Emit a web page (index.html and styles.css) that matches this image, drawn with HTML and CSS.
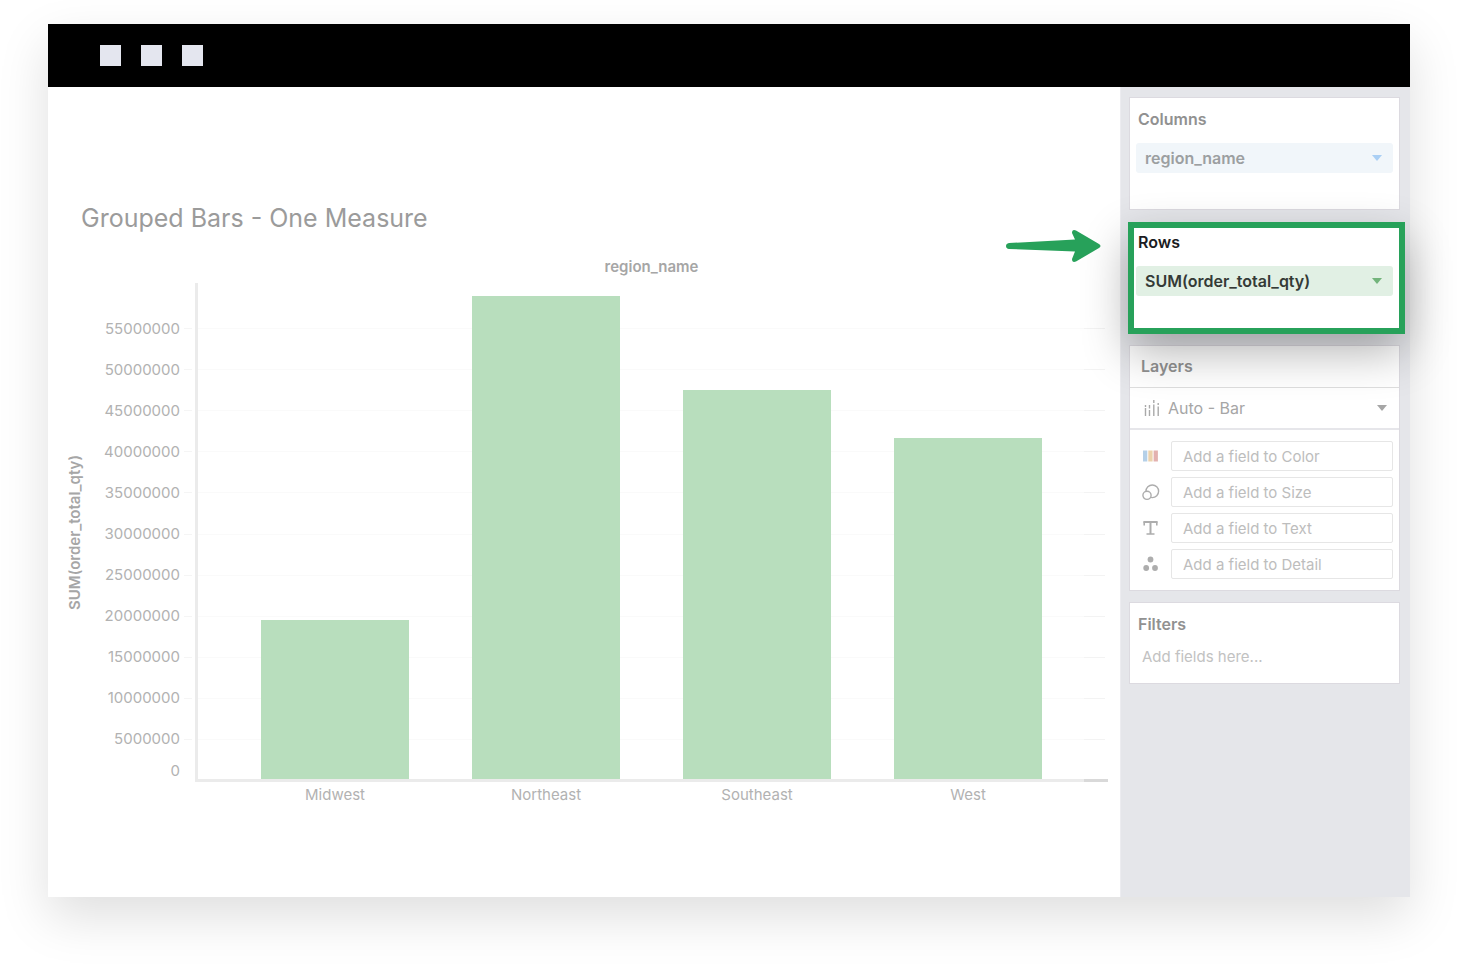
FILE: index.html
```html
<!DOCTYPE html>
<html lang="en">
<head>
<meta charset="utf-8">
<title>Grouped Bars - One Measure</title>
<link rel="stylesheet" href="styles.css">
</head>
<body>
<div class="window">
  <header class="titlebar"><span class="dot"></span><span class="dot"></span><span class="dot"></span></header>
  <div class="body">
    <main class="main">
      <h1 class="title">Grouped Bars - One Measure</h1>
      <section class="chart">
        <h2 class="chart-head">region_name</h2>
        <div class="y-title"><span>SUM(order_total_qty)</span></div>
        <ol class="scale">
          <li class="tick"><span class="num">55000000</span><i class="mark"></i><i class="line"></i></li>
          <li class="tick"><span class="num">50000000</span><i class="mark"></i><i class="line"></i></li>
          <li class="tick"><span class="num">45000000</span><i class="mark"></i><i class="line"></i></li>
          <li class="tick"><span class="num">40000000</span><i class="mark"></i><i class="line"></i></li>
          <li class="tick"><span class="num">35000000</span><i class="mark"></i><i class="line"></i></li>
          <li class="tick"><span class="num">30000000</span><i class="mark"></i><i class="line"></i></li>
          <li class="tick"><span class="num">25000000</span><i class="mark"></i><i class="line"></i></li>
          <li class="tick"><span class="num">20000000</span><i class="mark"></i><i class="line"></i></li>
          <li class="tick"><span class="num">15000000</span><i class="mark"></i><i class="line"></i></li>
          <li class="tick"><span class="num">10000000</span><i class="mark"></i><i class="line"></i></li>
          <li class="tick"><span class="num">5000000</span><i class="mark"></i><i class="line"></i></li>
          <li class="tick tick-zero"><span class="num">0</span></li>
        </ol>
        <div class="plot">
          <div class="bar" style="height:32.1%"></div>
          <div class="bar" style="height:97.4%"></div>
          <div class="bar" style="height:78.4%"></div>
          <div class="bar" style="height:68.8%"></div>
        </div>
        <div class="axis-end"></div>
        <div class="x-labels"><span>Midwest</span><span>Northeast</span><span>Southeast</span><span>West</span></div>
      </section>
    </main>
    <aside class="side">
      <section class="panel shelf">
        <h2 class="shelf-name">Columns</h2>
        <button class="pill pill-blue" type="button">region_name<span class="caret"></span></button>
      </section>
      <section class="shelf focus">
        <svg class="arrow" width="95" height="32" viewBox="0 0 95 32" aria-hidden="true"><path d="M3 13 L69 9.500 L66 3 Q66 -1 70 .5 L93 14 Q96 16 93 18 L70 31.500 Q66 33 66 29 L69 21.500 L3 19 Q0 18.500 0 16 Q0 13.500 3 13Z" fill="#27a15a"/></svg>
        <h2 class="shelf-name shelf-name-on">Rows</h2>
        <button class="pill pill-green" type="button">SUM(order_total_qty)<span class="caret"></span></button>
      </section>
      <section class="panel layers">
        <h2 class="layers-name">Layers</h2>
        <div class="mark-type">
          <svg class="mark-icon" width="16" height="18" viewBox="0 0 16 18" aria-hidden="true" stroke="#a9a9a9" stroke-width="1.400" fill="none"><path d="M1.500 6v2M1.500 9v8M5.500 6v3.500M5.500 11v6M9.800 1v3M9.800 5.500v11.500M14.200 4v2M14.200 7.500v9.500"/></svg>
          <select class="mark-select" aria-label="Mark type"><option>Auto - Bar</option></select>
          <span class="caret"></span>
        </div>
        <div class="fields">
          <label class="field">
            <svg width="18" height="18" viewBox="0 0 18 18" aria-hidden="true"><path d="M1 3.500h4.300v11h-4.300z" fill="#b5d0e8"/><path d="M6.300 3.500h4.300v11h-4.300z" fill="#ecd2ac"/><path d="M11.600 3.500h4.300v11h-4.300z" fill="#e3b1af"/></svg>
            <input class="input" type="text" placeholder="Add a field to Color" aria-label="Color">
          </label>
          <label class="field">
            <svg width="18" height="18" viewBox="0 0 18 18" aria-hidden="true" fill="none" stroke="#adadad" stroke-width="1.400"><circle cx="10.300" cy="8.300" r="6.300"/><circle cx="5" cy="12.300" r="4.100" fill="#fff"/></svg>
            <input class="input" type="text" placeholder="Add a field to Size" aria-label="Size">
          </label>
          <label class="field">
            <svg width="18" height="18" viewBox="0 0 18 18" aria-hidden="true" fill="none" stroke="#adadad"><path d="M1.500 3h14M8.500 3v12" stroke-width="2"/><path d="M2.200 2.500v4M14.800 2.500v4M4.500 15h8" stroke-width="1.600"/></svg>
            <input class="input" type="text" placeholder="Add a field to Text" aria-label="Text">
          </label>
          <label class="field">
            <svg width="18" height="18" viewBox="0 0 18 18" aria-hidden="true" fill="#adadad"><circle cx="8.500" cy="4.500" r="2.900"/><circle cx="4.200" cy="13" r="2.900"/><circle cx="13" cy="13" r="2.900"/></svg>
            <input class="input" type="text" placeholder="Add a field to Detail" aria-label="Detail">
          </label>
        </div>
      </section>
      <section class="panel filters">
        <h2 class="shelf-name">Filters</h2>
        <p class="hint">Add fields here...</p>
      </section>
    </aside>
  </div>
</div>
</body>
</html>
```

FILE: styles.css
```css
* { box-sizing: border-box; }
body {
  margin: 0;
  padding: 24px 48px 73px;
  min-height: 100vh;
  display: flex;
  background: #fff;
  font: 16px/20px Inter, "Liberation Sans", sans-serif;
  color: #919191;
}
h1, h2, p, ol { margin: 0; padding: 0; font-size: 16px; font-weight: 400; list-style: none; }
button, input, select { font: inherit; color: inherit; margin: 0; border: 0; }

.window {
  flex: 1;
  min-width: 0;
  display: flex;
  flex-direction: column;
  background: #fff;
  box-shadow: 0 20px 48px rgba(0, 0, 0, .13);
}
.titlebar {
  height: 63px;
  flex: none;
  display: flex;
  align-items: center;
  gap: 20px;
  padding: 0 52px;
  background: #000;
}
.dot { width: 21px; height: 21px; background: #e4e6ef; }
.body { flex: 1; display: flex; }

.main { flex: 1; min-width: 0; padding: 115px 12px 0 16px; }
.title { padding-left: 17px; font-size: 25px; line-height: 32px; color: #9b9b9b; }
.chart {
  display: grid;
  grid-template-columns: 22px 109px 1fr;
  grid-template-rows: auto 499px auto;
  padding-top: 23px;
}
.chart-head {
  grid-column: 3;
  padding-bottom: 6px;
  text-align: center;
  font-size: 15px;
  font-weight: 600;
  color: #a6a6a6;
}
.y-title {
  grid-area: 2 / 1;
  display: flex;
  align-items: center;
  justify-content: center;
  font-size: 15px;
  font-weight: 600;
  color: #a6a6a6;
}
.y-title span { writing-mode: vertical-rl; transform: rotate(180deg); white-space: nowrap; }
.scale {
  grid-area: 2 / 2 / 3 / 4;
  display: flex;
  flex-direction: column;
  padding: 25px 3px 0 0;
  font-size: 15px;
  color: #b2b2b2;
}
.tick {
  flex: 1;
  display: grid;
  grid-template-columns: 94px 8px 1fr;
  align-items: center;
}
.tick-zero { flex: 0 0 22px; }
.num { text-align: right; }
.mark { height: 1px; margin-left: 4px; margin-right: -4px; background: #f5f5f5; }
.line {
  height: 1px;
  margin-left: 10px;
  background: linear-gradient(to left, #f3f3f3 21px, #fafafa 21px);
}
.plot {
  grid-area: 2 / 3;
  display: grid;
  grid-template-columns: repeat(4, 1fr);
  gap: 63px;
  align-items: end;
  padding: 0 66px 0 63px;
  border-left: 3px solid #ebebeb;
  border-bottom: 3px solid #ebebeb;
}
.bar { background: #b8debd; }
.axis-end {
  grid-area: 2 / 3;
  align-self: end;
  justify-self: end;
  width: 24px;
  height: 3px;
  background: #d9d9d9;
}
.x-labels {
  grid-area: 3 / 3;
  display: grid;
  grid-template-columns: repeat(4, 1fr);
  gap: 63px;
  padding: 3px 66px 0;
  text-align: center;
  font-size: 15px;
  color: #b2b2b2;
}

.side {
  flex: 0 0 290px;
  display: flex;
  flex-direction: column;
  gap: 12px;
  padding: 10px 10px 10px 8px;
  border-left: 1px solid #ececf0;
  background: #e5e6ea;
}
.panel { background: #fff; border: 1px solid #dcdae0; }
.shelf { height: 113px; padding: 11px 6px; }
.shelf-name { padding-left: 2px; font-weight: 600; line-height: 20px; color: #919191; }
.shelf-name-on { color: #1c1c22; }
.pill {
  width: 100%;
  height: 30px;
  margin-top: 14px;
  display: flex;
  align-items: center;
  justify-content: space-between;
  padding: 0 11px 0 9px;
  border-radius: 3px;
  font-weight: 600;
}
.caret {
  border: 5px solid transparent;
  border-top: 6px solid currentColor;
  border-bottom: 0;
}
.pill-blue { background: #f1f6fa; color: #9c9fa1; }
.pill-blue .caret { color: #aacff4; }
.pill-green { background: #e1f0e4; color: #343a36; }
.pill-green .caret { color: #72b47b; }
.focus {
  position: relative;
  z-index: 1;
  height: 112px;
  margin: 0 -5px -1px -1px;
  padding: 4px 6px 4px 2px;
  border: 6px solid #27a15a;
  background: #fff;
  box-shadow: 0 18px 46px rgba(0, 0, 0, .3);
}
.arrow { position: absolute; top: 2px; right: calc(100% + 33px); }

.layers-name {
  padding: 10px 11px 11px;
  font-weight: 600;
  color: #919191;
}
.mark-type {
  display: flex;
  align-items: center;
  gap: 8px;
  padding: 10px 12px 10px 14px;
  border-top: 1px solid #dedede;
  border-bottom: 2px solid #e6e6ea;
  color: #a6a6a6;
}
.mark-select { flex: 1; height: 20px; padding: 0; appearance: none; background: none; }
.fields { display: grid; gap: 6px; padding: 11px 6px 11px; font-size: 15px; }
.field { display: grid; grid-template-columns: 18px 1fr; gap: 11px; align-items: center; padding-left: 6px; }
.input {
  width: 100%;
  height: 30px;
  padding: 0 11px;
  border: 1px solid #e6e6e6;
  border-radius: 2px;
  background: #fff;
}
.input::placeholder { color: #bdbdbd; opacity: 1; }
.filters { margin-top: -1px; padding: 11px 6px 16px; }
.hint { padding: 13px 6px 0; font-size: 15px; color: #c2c2c2; }
```
